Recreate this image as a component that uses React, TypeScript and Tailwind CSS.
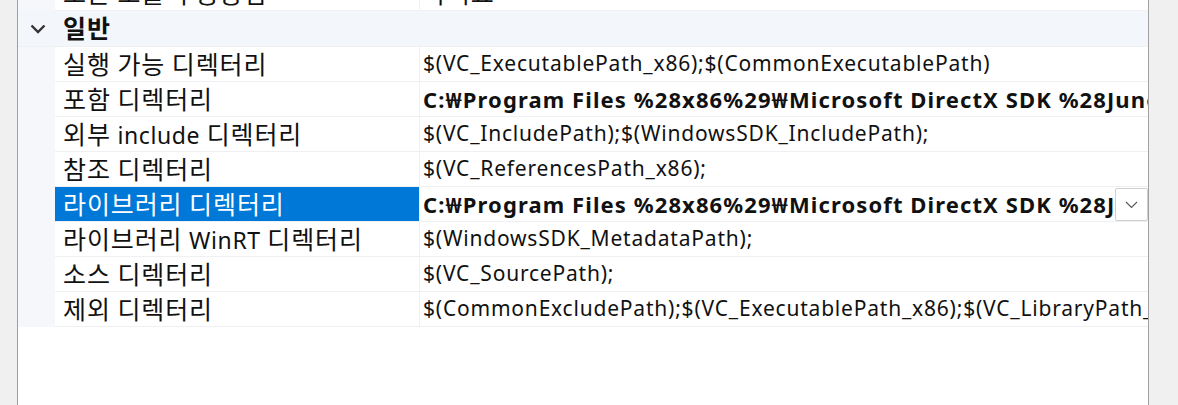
import React from 'react';

const FONT = { fontFamily: "'Noto Sans', 'Noto Sans CJK KR', sans-serif" };

interface PropRow {
  name: string;
  value: string;
  bold?: boolean;
  selected?: boolean;
}

const rows: PropRow[] = [
  { name: '실행 가능 디렉터리', value: '$(VC_ExecutablePath_x86);$(CommonExecutablePath)' },
  { name: '포함 디렉터리', value: 'C:₩Program Files %28x86%29₩Microsoft DirectX SDK %28June 2010%29₩Include;$(IncludePath)', bold: true },
  { name: '외부 include 디렉터리', value: '$(VC_IncludePath);$(WindowsSDK_IncludePath);' },
  { name: '참조 디렉터리', value: '$(VC_ReferencesPath_x86);' },
  { name: '라이브러리 디렉터리', value: 'C:₩Program Files %28x86%29₩Microsoft DirectX SDK %28June 2010%29₩Lib₩x86;$(LibraryPath)', bold: true, selected: true },
  { name: '라이브러리 WinRT 디렉터리', value: '$(WindowsSDK_MetadataPath);' },
  { name: '소스 디렉터리', value: '$(VC_SourcePath);' },
  { name: '제외 디렉터리', value: '$(CommonExcludePath);$(VC_ExecutablePath_x86);$(VC_LibraryPath_x86);$(WindowsSDK_LibraryPath_x86)' },
];

// Hangul runs are set a bit larger than the latin runs, like Malgun Gothic in the original
const Label = ({ text }: { text: string }) => (
  <span className="whitespace-pre">
    {text.split(/([가-힣]+)/).map((part, i) =>
      /[가-힣]/.test(part) ? (
        <span key={i} className="text-[25px] tracking-[0.9px]">{part}</span>
      ) : (
        <span key={i} className="text-[23px] tracking-[0.6px]">{part}</span>
      )
    )}
  </span>
);

const Chevron = ({ className }: { className?: string }) => (
  <svg width="16" height="10" viewBox="0 0 16 10" className={className}>
    <path d="M1.5 1.5 L8 8 L14.5 1.5" fill="none" stroke="currentColor" strokeWidth="2.4" />
  </svg>
);

const Row = ({ row }: { row: PropRow }) => (
  <div className="flex h-[35px] shrink-0">
    <div className="w-[37px] shrink-0 bg-[#f5f7fb]" />
    <div
      className={`w-[365px] shrink-0 flex items-center pl-[8px] border-b border-r border-[#eef0f4] overflow-hidden leading-none ${
        row.selected ? 'bg-[#0078d7] text-white' : 'text-[#111]'
      }`}
    >
      <Label text={row.name} />
    </div>
    <div className={`flex-1 min-w-0 flex items-center border-b border-[#eef0f4] relative ${row.selected ? 'pr-[35px]' : ''}`}>
      <span
        className={`pl-[3px] min-w-0 whitespace-nowrap overflow-hidden text-[#111] ${
          row.bold ? 'font-bold text-[22px] tracking-[1.1px]' : 'text-[21px] tracking-[0.8px]'
        }`}
      >
        {row.value}
      </span>
      {row.selected && (
        <div className="absolute right-0 top-[1px] w-[33px] h-[33px] bg-white border border-[#cfcfcf] rounded-[2px] flex items-center justify-center text-[#555]">
          <svg width="13" height="8" viewBox="0 0 13 8">
            <path d="M1 1 L6.5 6.5 L12 1" fill="none" stroke="currentColor" strokeWidth="1.1" />
          </svg>
        </div>
      )}
    </div>
  </div>
);

export default function App() {
  return (
    <div className="flex w-[1178px] h-[405px] bg-white overflow-hidden" style={FONT}>
      <div className="w-[18px] shrink-0 bg-[#f0f0f0] border-r border-[#a0a0a0]" />
      <div className="flex-1 min-w-0 flex flex-col overflow-hidden">
        {/* last row of the previous category, scrolled mostly out of view */}
        <div className="flex h-[35px] shrink-0 -mt-[24px]">
          <div className="w-[37px] shrink-0 bg-[#f5f7fb]" />
          <div className="w-[365px] shrink-0 flex items-center pl-[8px] border-b border-r border-[#eef0f4] text-[#111] leading-none">
            <Label text="모든 모듈이 공용임" />
          </div>
          <div className="flex-1 flex items-center pl-[3px] border-b border-[#eef0f4] text-[#111] leading-none">
            <Label text="아니요" />
          </div>
        </div>
        <div className="flex items-center h-[36px] shrink-0 bg-[#f3f6fa] border-b border-[#eef0f4]">
          <div className="w-[37px] shrink-0 flex justify-center pl-[3px]">
            <Chevron className="text-[#333]" />
          </div>
          <span className="pl-[8px] font-bold text-[#111] text-[25px] tracking-[0.9px] leading-none">일반</span>
        </div>
        {rows.map(r => (
          <Row key={r.name} row={r} />
        ))}
      </div>
      <div className="w-[30px] shrink-0 bg-[#f0f0f0] border-l border-[#a0a0a0]" />
    </div>
  );
}
